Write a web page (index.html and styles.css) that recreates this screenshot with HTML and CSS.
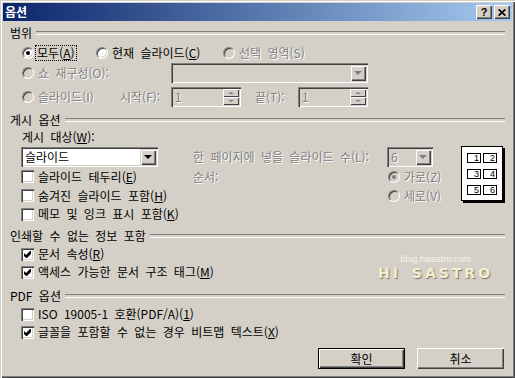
FILE: index.html
```html
<!DOCTYPE html>
<html lang="ko">
<head>
    <meta charset="UTF-8">
    <meta name="viewport" content="width=device-width, initial-scale=1.0">
    <title>옵션</title>
    <link rel="stylesheet" href="styles.css">
</head>
<body>
    <div class="window">
        <div class="titlebar">
            <span class="title">옵션</span>
            <div class="caption-btns">
                <span class="cap-btn">?</span>
                <span class="cap-btn">
                    <svg width="8" height="7" viewBox="0 0 8 7"><path d="M0.6 0.4L7.4 6.6M7.4 0.4L0.6 6.6" stroke="#000" stroke-width="1.7"/></svg>
                </span>
            </div>
        </div>

        <div class="client">
            <!-- 범위 -->
            <div class="group-head">범위</div>
            <div class="row mt4">
                <label class="opt w74"><span class="radio on"></span><span class="focus">모두(<u>A</u>)</span></label>
                <label class="opt w127"><span class="radio"></span><span>현재 슬라이드(<u>C</u>)</span></label>
                <label class="opt off"><span class="radio"></span><span>선택 영역(S)</span></label>
            </div>
            <div class="row tall mt1">
                <label class="opt off w150"><span class="radio"></span><span>쇼 재구성(O):</span></label>
                <div class="combo off w197"><span class="combo-text"></span><span class="drop"><i></i></span></div>
            </div>
            <div class="row tall mt4">
                <label class="opt off w99"><span class="radio"></span><span>슬라이드(I)</span></label>
                <span class="off w51">시작(F):</span>
                <div class="combo off w70">
                    <span class="combo-text">1</span>
                    <span class="spin-btns"><span class="sb"><i class="up"></i></span><span class="sb"><i class="down"></i></span></span>
                </div>
                <span class="off w43 ml14">끝(T):</span>
                <div class="combo off w70">
                    <span class="combo-text">1</span>
                    <span class="spin-btns"><span class="sb"><i class="up"></i></span><span class="sb"><i class="down"></i></span></span>
                </div>
            </div>

            <!-- 게시 옵션 -->
            <div class="group-head mt6">게시 옵션</div>
            <div class="sub-label">게시 대상(<u>W</u>):</div>
            <div class="publish">
                <div class="preview">
                    <span>1</span><span>2</span>
                    <span>3</span><span>4</span>
                    <span>5</span><span>6</span>
                </div>
                <div class="combo w137"><span class="combo-text">슬라이드</span><span class="drop"><i></i></span></div>
                <span class="off">한 페이지에 넣을 슬라이드 수(L):</span>
                <div class="combo off w46"><span class="combo-text">6</span><span class="drop"><i></i></span></div>

                <label class="opt"><span class="check"></span><span>슬라이드 테두리(<u>E</u>)</span></label>
                <span class="off">순서:</span>
                <label class="opt off"><span class="radio on"></span><span>가로(Z)</span></label>

                <label class="opt"><span class="check"></span><span>숨겨진 슬라이드 포함(<u>H</u>)</span></label>
                <span></span>
                <label class="opt off"><span class="radio"></span><span>세로(V)</span></label>

                <label class="opt"><span class="check"></span><span>메모 및 잉크 표시 포함(<u>K</u>)</span></label>
            </div>

            <!-- 인쇄할 수 없는 정보 포함 -->
            <div class="group-head mt6">인쇄할 수 없는 정보 포함</div>
            <div class="row mt2">
                <label class="opt"><span class="check"><svg width="7" height="7" viewBox="0 0 7 7"><path d="M0 2L2 4L6 0H7V3L3 7H2L0 5Z"/></svg></span><span>문서 속성(<u>R</u>)</span></label>
            </div>
            <div class="row">
                <label class="opt"><span class="check"><svg width="7" height="7" viewBox="0 0 7 7"><path d="M0 2L2 4L6 0H7V3L3 7H2L0 5Z"/></svg></span><span>액세스 가능한 문서 구조 태그(<u>M</u>)</span></label>
            </div>

            <!-- PDF 옵션 -->
            <div class="group-head mt8">PDF 옵션</div>
            <div class="row mt2">
                <label class="opt"><span class="check"></span><span>ISO 19005-1 호환(PDF/A)(<u>1</u>)</span></label>
            </div>
            <div class="row">
                <label class="opt"><span class="check"><svg width="7" height="7" viewBox="0 0 7 7"><path d="M0 2L2 4L6 0H7V3L3 7H2L0 5Z"/></svg></span><span>글꼴을 포함할 수 없는 경우 비트맵 텍스트(<u>X</u>)</span></label>
            </div>

            <div class="actions">
                <button class="btn default">확인</button>
                <button class="btn">취소</button>
            </div>
        </div>

        <div class="watermark">
            <span class="wm-url">blog.hisastro.com</span>
            <span class="wm-name">HI SASTRO</span>
        </div>
    </div>
</body>
</html>
```

FILE: styles.css
```css
* {
    box-sizing: border-box;
}
html, body {
    margin: 0;
}
body {
    background-color: #d4d0c8;
    color: #000;
    font-family: "Noto Sans CJK KR", "Noto Sans", sans-serif;
    font-size: 12px;
    line-height: 14px;
    word-spacing: 3px;
}
.window {
    position: relative;
    display: flex;
    flex-direction: column;
    width: 515px;
    height: 378px;
    padding: 3px;
    background-color: #d4d0c8;
    box-shadow: inset 1px 1px #d4d0c8, inset 2px 2px #fff, inset -1px -1px #404040, inset -2px -2px #808080;
}
.titlebar {
    display: flex;
    align-items: center;
    justify-content: space-between;
    height: 18px;
    padding: 0 2px 0 2px;
    background: linear-gradient(to right, #0a246a, #a6caf0);
}
.title {
    color: #fff;
    font-weight: bold;
}
.caption-btns {
    display: flex;
    gap: 2px;
}
.cap-btn {
    display: flex;
    align-items: center;
    justify-content: center;
    width: 16px;
    height: 14px;
    background-color: #d4d0c8;
    box-shadow: inset 1px 1px #fff, inset -1px -1px #404040, inset -2px -2px #808080;
    font: bold 11px "Liberation Sans", sans-serif;
}
.client {
    flex: 1;
    display: flex;
    flex-direction: column;
    padding: 5px 7px 0;
}
.group-head {
    display: flex;
    align-items: center;
    gap: 4px;
    height: 14px;
}
.group-head::after {
    content: "";
    flex: 1;
    height: 2px;
    border-top: 1px solid #808080;
    border-bottom: 1px solid #fff;
}
.row {
    display: flex;
    align-items: center;
    height: 18px;
    padding-left: 11px;
}
.row.tall {
    height: 20px;
}
.mt1 { margin-top: 1px; }
.mt2 { margin-top: 2px; }
.mt4 { margin-top: 4px; }
.mt6 { margin-top: 6px; }
.mt8 { margin-top: 8px; }
.ml14 { margin-left: 14px; }
.w43 { width: 43px; flex: none; }
.w46 { width: 46px; flex: none; }
.w51 { width: 51px; flex: none; }
.w70 { width: 70px; flex: none; }
.w74 { width: 74px; flex: none; }
.w99 { width: 99px; flex: none; }
.w127 { width: 127px; flex: none; }
.w137 { width: 137px; flex: none; }
.w150 { width: 150px; flex: none; }
.w197 { width: 197px; flex: none; }
.off {
    color: #808080;
    text-shadow: 1px 1px #fff;
}
.opt {
    display: flex;
    align-items: center;
    gap: 4px;
    white-space: nowrap;
}
.focus {
    outline: 1px dotted #000;
    padding: 0 1px;
    margin-left: -2px;
}
.radio {
    position: relative;
    flex: none;
    width: 12px;
    height: 12px;
    margin-left: 1px;
    border-radius: 50%;
    border: 1px solid;
    border-color: #808080 #fff #fff #808080;
    background-color: #fff;
    box-shadow: inset 1px 1px #404040, inset -1px -1px #d4d0c8;
}
.radio.on::after {
    content: "";
    position: absolute;
    left: 3px;
    top: 3px;
    width: 4px;
    height: 4px;
    border-radius: 50%;
    background-color: #000;
}
.off .radio {
    background-color: #d4d0c8;
}
.off .radio.on::after {
    background-color: #808080;
}
.check {
    flex: none;
    display: flex;
    align-items: center;
    justify-content: center;
    width: 13px;
    height: 13px;
    background-color: #fff;
    box-shadow: inset 1px 1px #808080, inset 2px 2px #404040, inset -1px -1px #fff, inset -2px -2px #d4d0c8;
}
.combo {
    display: flex;
    align-items: center;
    justify-content: space-between;
    height: 20px;
    padding: 2px;
    background-color: #fff;
    box-shadow: inset 1px 1px #808080, inset 2px 2px #404040, inset -1px -1px #fff, inset -2px -2px #d4d0c8;
}
.combo.off {
    background-color: #d4d0c8;
}
.combo-text {
    padding-left: 2px;
}
.drop {
    display: flex;
    align-items: center;
    justify-content: center;
    width: 16px;
    height: 16px;
    background-color: #d4d0c8;
    box-shadow: inset 1px 1px #d4d0c8, inset 2px 2px #fff, inset -1px -1px #404040, inset -2px -2px #808080;
}
.drop i {
    border-left: 4px solid transparent;
    border-right: 4px solid transparent;
    border-top: 4px solid #000;
}
.off .drop i {
    border-top-color: #808080;
}
.spin-btns {
    display: flex;
    flex-direction: column;
}
.sb {
    display: flex;
    align-items: center;
    justify-content: center;
    width: 16px;
    height: 8px;
    background-color: #d4d0c8;
    box-shadow: inset 1px 1px #fff, inset -1px -1px #404040;
}
.sb i {
    border-left: 3px solid transparent;
    border-right: 3px solid transparent;
}
.sb i.up {
    border-bottom: 2px solid #808080;
}
.sb i.down {
    border-top: 2px solid #808080;
}
.sub-label {
    margin-top: 3px;
    padding-left: 12px;
    height: 14px;
}
.publish {
    display: grid;
    grid-template-columns: 172px 194px 74px 44px;
    grid-template-rows: 20px 19px 19px 18px;
    align-items: center;
    margin: 3px 0 0 11px;
    white-space: nowrap;
}
.publish .radio {
    margin-left: 1px;
}
.preview {
    grid-column: 4;
    grid-row: 1 / span 3;
    align-self: start;
    display: grid;
    grid-template-columns: 14px 14px;
    grid-auto-rows: 10px;
    column-gap: 2px;
    row-gap: 6px;
    align-content: start;
    width: 42px;
    height: 55px;
    margin-top: -1px;
    padding: 6px 0 0 5px;
    background-color: #fff;
    border: 1px solid #000;
    box-shadow: 2px 2px 0 #000;
}
.preview span {
    border: 1px solid #000;
    padding-right: 1px;
    font: 9px/8px "Liberation Sans", sans-serif;
    text-align: right;
}
.actions {
    display: flex;
    justify-content: flex-end;
    gap: 12px;
    margin-top: 7px;
    padding-right: 1px;
}
.btn {
    width: 87px;
    height: 21px;
    padding: 0;
    border: none;
    background-color: #d4d0c8;
    font: inherit;
    color: #000;
    box-shadow: inset 1px 1px #fff, inset -1px -1px #404040, inset -2px -2px #808080;
}
.btn.default {
    box-shadow: inset 0 0 0 1px #000, inset 2px 2px #fff, inset -2px -2px #404040, inset -3px -3px #808080;
}
.watermark {
    position: absolute;
    left: 378px;
    top: 254px;
    display: flex;
    flex-direction: column;
    align-items: center;
    pointer-events: none;
}
.wm-url {
    font: 9px/11px "Liberation Sans", sans-serif;
    color: #f6f4ea;
    word-spacing: 0;
}
.wm-name {
    font: bold 14px/16px "DejaVu Sans", sans-serif;
    letter-spacing: 3px;
    color: #f3efcf;
    text-shadow: 1px 1px 1px #7d7a66;
}
```
